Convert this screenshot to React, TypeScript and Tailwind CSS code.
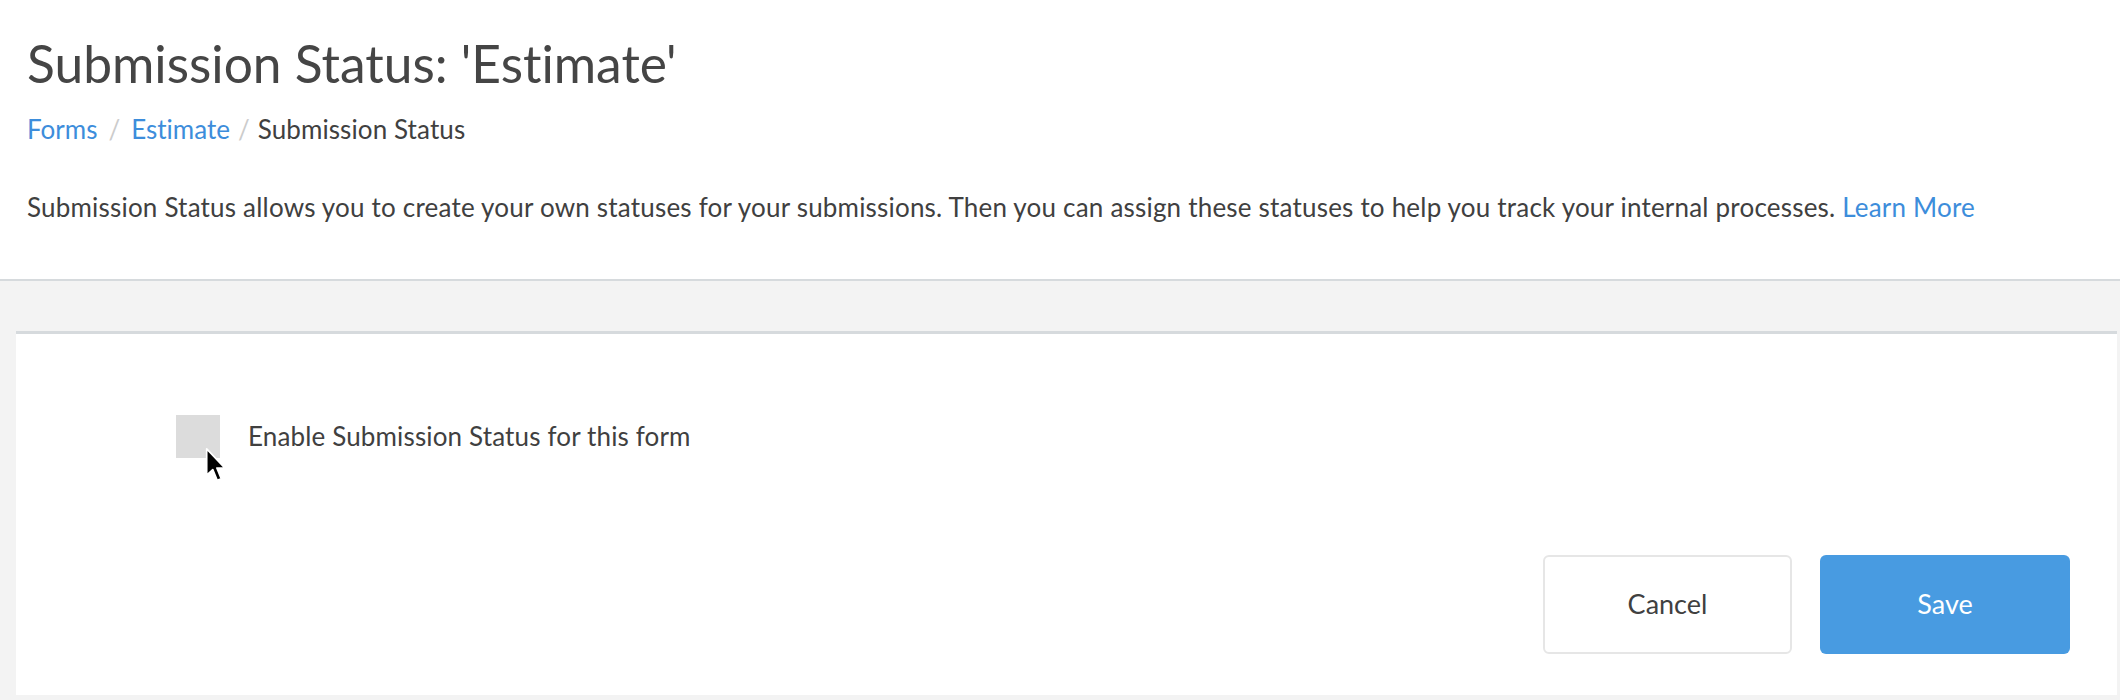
import React from 'react';

const font = { fontFamily: 'Lato, "Noto Sans", sans-serif' };

function Cursor() {
  return (
    <svg
      width="22"
      height="36"
      viewBox="0 0 13 21"
      className="absolute left-[29px] top-[32px] pointer-events-none"
    >
      <path
        d="M1 1 L1 16.5 L4.6 13.2 L7.2 19.6 L9.6 18.6 L7 12.3 L11.8 12.3 Z"
        fill="#000"
        stroke="#fff"
        strokeWidth="1"
        strokeLinejoin="round"
      />
    </svg>
  );
}

export default function App() {
  return (
    <div
      className="h-[700px] overflow-hidden bg-[#f3f3f3] text-[#404040] [font-variant-ligatures:none]"
      style={font}
    >
      {/* Page header */}
      <div className="bg-white border-b-2 border-[#d6dadd] px-[27px] pt-[32px] pb-[56px]">
        <h1 className="text-[51.5px] leading-[62px] font-normal text-[#454545]">Submission Status: 'Estimate'</h1>
        <nav className="mt-[20px] flex items-center text-[26px] leading-[31px]">
          <a className="text-[#3d8ddb]">Forms</a>
          <span className="mx-[11px] text-[#cccccc]">/</span>
          <a className="text-[#3d8ddb]">Estimate</a>
          <span className="mx-[8px] text-[#cccccc]">/</span>
          <span className="tracking-[0.1px]">Submission Status</span>
        </nav>
        <p className="mt-[47px] text-[26px] leading-[31px] tracking-[0.2px]">
          Submission Status allows you to create your own statuses for your submissions. Then you can assign
          these statuses to help you track your internal processes.{' '}
          <a className="text-[#3d8ddb]">Learn More</a>
        </p>
      </div>

      {/* Settings card */}
      <div className="mt-[50px] ml-[16px] mr-[3px] bg-white border-t-[3px] border-[#d6dadd] pt-[81px] pb-[41px]">
        <label className="flex items-center pl-[160px]">
          <span className="relative block w-[44px] h-[43px] bg-[#dcdcdc]">
            <Cursor />
          </span>
          <span className="ml-[28px] text-[26px] leading-[31px] tracking-[0.15px]">
            Enable Submission Status for this form
          </span>
        </label>

        <div className="mt-[97px] flex justify-end gap-[28px] pr-[47px]">
          <button className="w-[249px] h-[99px] rounded-[6px] border-2 border-[#e6e6e6] bg-white text-[27px] text-[#404040]">
            Cancel
          </button>
          <button className="w-[250px] h-[99px] rounded-[6px] bg-[#489be1] text-[27px] text-white">
            Save
          </button>
        </div>
      </div>
    </div>
  );
}
